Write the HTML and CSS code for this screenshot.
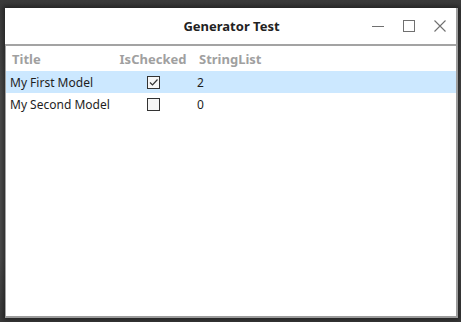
FILE: index.html
```html
<!DOCTYPE html>
<html lang="en">
<head>
    <meta charset="UTF-8">
    <title>Generator Test</title>
    <link rel="stylesheet" href="styles.css">
</head>
<body>
    <div class="window">
        <div class="titlebar">
            <span class="title">Generator Test</span>
            <div class="controls">
                <span class="ctl">
                    <svg width="12" height="12" viewBox="0 0 12 12"><path d="M0 6.5h12" stroke="#707070" stroke-width="1"/></svg>
                </span>
                <span class="ctl">
                    <svg width="12" height="12" viewBox="0 0 12 12"><rect x="0.5" y="0.5" width="11" height="11" fill="none" stroke="#707070" stroke-width="1"/></svg>
                </span>
                <span class="ctl">
                    <svg width="12" height="12" viewBox="0 0 12 12"><path d="M0.5 0.5l11 11M11.5 0.5l-11 11" stroke="#707070" stroke-width="1.1"/></svg>
                </span>
            </div>
        </div>
        <div class="content">
            <div class="grid head">
                <div class="cell">Title</div>
                <div class="cell center">IsChecked</div>
                <div class="cell">StringList</div>
            </div>
            <div class="grid row selected">
                <div class="cell">My First Model</div>
                <div class="cell center"><span class="box checked">
                    <svg width="11" height="11" viewBox="0 0 11 11"><path d="M2 5.5l2.5 2.5l5-5.5" fill="none" stroke="#333" stroke-width="1.2"/></svg>
                </span></div>
                <div class="cell">2</div>
            </div>
            <div class="grid row">
                <div class="cell">My Second Model</div>
                <div class="cell center"><span class="box"></span></div>
                <div class="cell">0</div>
            </div>
        </div>
    </div>
</body>
</html>
```

FILE: styles.css
```css
body {
    margin: 0;
    width: 461px;
    height: 322px;
    overflow: hidden;
    background: linear-gradient(#3a3a3a, #4c4c4c 30%, #4c4c4c 80%, #3a3a3a);
    font-family: "Noto Sans", "DejaVu Sans", sans-serif;
}
.window {
    margin: 8px 0 0 5px;
    width: 451px;
    height: 308px;
    background: #fff;
    border-right: 2px solid #9c9c9c;
    border-bottom: 2px solid #9c9c9c;
    display: flex;
    flex-direction: column;
    box-shadow: 0 0 5px 2px rgba(0, 0, 0, 0.45);
}
.titlebar {
    height: 36px;
    position: relative;
    display: flex;
    align-items: center;
    justify-content: center;
    border-bottom: 2px solid #a3a3a3;
}
.title {
    font-weight: bold;
    font-size: 13px;
    color: #222;
    margin-left: 2px;
}
.controls {
    position: absolute;
    right: 10px;
    top: 12px;
    display: flex;
    gap: 19px;
}
.ctl {
    width: 12px;
    height: 12px;
    display: block;
}
.ctl svg {
    display: block;
}
.content {
    flex: 1;
    border-left: 1px solid #a3a3a3;
}
.grid {
    display: grid;
    grid-template-columns: 107px 80px 1fr;
    align-items: center;
}
.head {
    height: 25px;
    font-weight: bold;
    font-size: 13px;
    color: #a0a0a0;
}
.head .cell:first-child {
    padding-left: 6px;
}
.head .cell:last-child {
    padding-left: 6px;
}
.row {
    height: 22px;
    font-size: 12px;
    color: #1e1e1e;
}
.row .cell {
    padding-left: 4px;
}
.row .cell.center {
    padding-left: 0;
}
.selected {
    background: #cce8ff;
}
.center {
    display: flex;
    justify-content: center;
}
.box {
    width: 11px;
    height: 11px;
    border: 1px solid #333;
    background: #f6f6f6;
    display: block;
}
.box svg {
    display: block;
}
```
